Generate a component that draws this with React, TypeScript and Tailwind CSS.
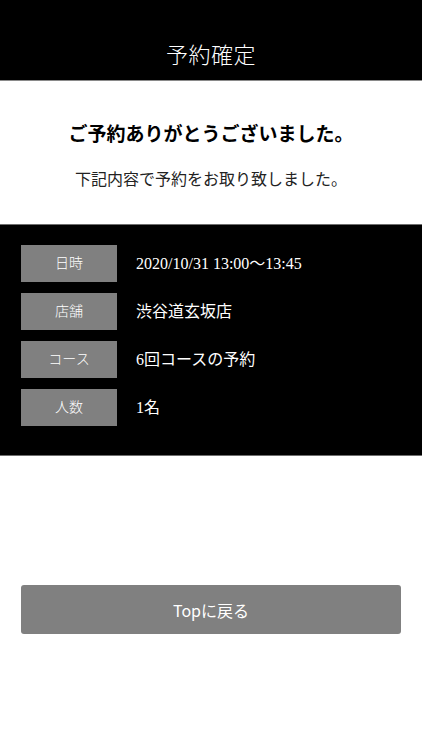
import React from 'react';

const serif = { fontFamily: '"Liberation Serif", "Noto Sans CJK JP", serif' };

const rows = [
  { label: '日時', value: '2020/10/31 13:00〜13:45' },
  { label: '店舗', value: '渋谷道玄坂店' },
  { label: 'コース', value: '6回コースの予約' },
  { label: '人数', value: '1名' },
];

export default function App() {
  return (
    <div className="w-[422px] h-[750px] bg-white flex flex-col" style={serif}>
      {/* Header */}
      <div className="h-[81px] bg-black border-b border-[#8a8a8a] flex items-center justify-center pt-[30px]">
        <h1 className="text-white text-[22px] font-light tracking-[0.02em]">予約確定</h1>
      </div>

      {/* Thanks */}
      <div className="h-[143px] flex flex-col items-center pt-[40px]">
        <p className="text-black text-[19px] font-bold leading-[28px]">ご予約ありがとうございました。</p>
        <p className="text-[#222] text-[16px] leading-[24px] mt-[19px]">下記内容で予約をお取り致しました。</p>
      </div>

      {/* Details */}
      <div className="bg-black border-t border-b border-[#6e6e6e] pt-[20px] pb-[29px] px-[21px] flex flex-col gap-[11px]">
        {rows.map((r) => (
          <div key={r.label} className="flex items-center">
            <div className="w-[96px] h-[37px] bg-[#808080] flex items-center justify-center text-white text-[14px] font-light">
              {r.label}
            </div>
            <div className="ml-[19px] text-white text-[16px]">{r.value}</div>
          </div>
        ))}
      </div>

      {/* Button */}
      <div className="px-[21px] pt-[129px]">
        <button
          className="w-full h-[49px] rounded-[3px] bg-[#808080] text-white text-[16px]"
          style={{ fontFamily: '"Noto Sans CJK JP", "Noto Sans", sans-serif' }}
        >
          Topに戻る
        </button>
      </div>
    </div>
  );
}
